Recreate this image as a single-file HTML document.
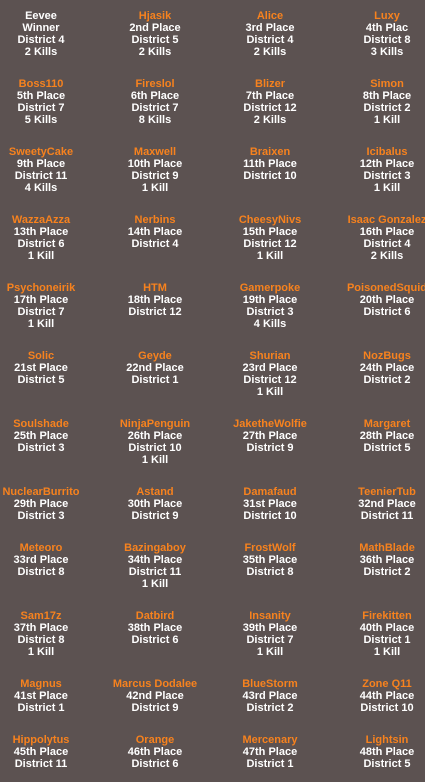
<!DOCTYPE html><html><head><style>
body{margin:0;width:425px;height:782px;background:#5c5251;font:bold 11px/12px "Liberation Sans",Arial,sans-serif;color:#fff;position:relative;overflow:hidden}
.c{position:absolute;width:140px;margin-left:-70px;text-align:center;white-space:nowrap}
.n{color:#f7821e}
</style></head><body>
<script>
const d=[
["Eevee","Winner","District 4","2 Kills",1],["Hjasik","2nd Place","District 5","2 Kills"],["Alice","3rd Place","District 4","2 Kills"],["Luxy","4th Plac","District 8","3 Kills"],
["Boss110","5th Place","District 7","5 Kills"],["Fireslol","6th Place","District 7","8 Kills"],["Blizer","7th Place","District 12","2 Kills"],["Simon","8th Place","District 2","1 Kill"],
["SweetyCake","9th Place","District 11","4 Kills"],["Maxwell","10th Place","District 9","1 Kill"],["Braixen","11th Place","District 10"],["Icibalus","12th Place","District 3","1 Kill"],
["WazzaAzza","13th Place","District 6","1 Kill"],["Nerbins","14th Place","District 4"],["CheesyNivs","15th Place","District 12","1 Kill"],["Isaac Gonzalez","16th Place","District 4","2 Kills"],
["Psychoneirik","17th Place","District 7","1 Kill"],["HTM","18th Place","District 12"],["Gamerpoke","19th Place","District 3","4 Kills"],["PoisonedSquid","20th Place","District 6"],
["Solic","21st Place","District 5"],["Geyde","22nd Place","District 1"],["Shurian","23rd Place","District 12","1 Kill"],["NozBugs","24th Place","District 2"],
["Soulshade","25th Place","District 3"],["NinjaPenguin","26th Place","District 10","1 Kill"],["JaketheWolfie","27th Place","District 9"],["Margaret","28th Place","District 5"],
["NuclearBurrito","29th Place","District 3"],["Astand","30th Place","District 9"],["Damafaud","31st Place","District 10"],["TeenierTub","32nd Place","District 11"],
["Meteoro","33rd Place","District 8"],["Bazingaboy","34th Place","District 11","1 Kill"],["FrostWolf","35th Place","District 8"],["MathBlade","36th Place","District 2"],
["Sam17z","37th Place","District 8","1 Kill"],["Datbird","38th Place","District 6"],["Insanity","39th Place","District 7","1 Kill"],["Firekitten","40th Place","District 1","1 Kill"],
["Magnus","41st Place","District 1"],["Marcus Dodalee","42nd Place","District 9"],["BlueStorm","43rd Place","District 2"],["Zone Q11","44th Place","District 10"],
["Hippolytus","45th Place","District 11"],["Orange","46th Place","District 6"],["Mercenary","47th Place","District 1"],["Lightsin","48th Place","District 5"]];
const ys=[10,78,146,214,282,350,418,486,542,610,678,734],xs=[41,155,270,387];
let h="";
d.forEach((e,i)=>{const r=Math.floor(i/4),c=i%4;
h+=`<div class="c" style="left:${xs[c]}px;top:${ys[r]}px"><span class="${i?'n':''}">${e[0]}</span><br>${e[1]}<br>${e[2]}${e[3]?'<br>'+e[3]:''}</div>`;});
document.write(h);
</script>
</body></html>
